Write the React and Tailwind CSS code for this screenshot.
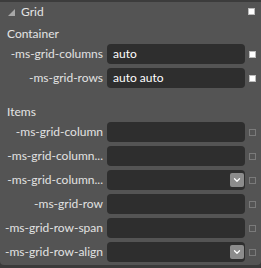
import { ChevronDown } from 'lucide-react';

// Property rows shown in the panel
const containerRows = [
  { label: '-ms-grid-columns', value: 'auto' },
  { label: '-ms-grid-rows', value: 'auto auto' },
];

const itemRows = [
  { label: '-ms-grid-column' },
  { label: '-ms-grid-column...' },
  { label: '-ms-grid-column...', select: true },
  { label: '-ms-grid-row' },
  { label: '-ms-grid-row-span' },
  { label: '-ms-grid-row-align', select: true },
];

function Row({ label, value, select, set }) {
  return (
    <div className="flex items-center h-5">
      <div className="w-[103px] text-right text-[#e2e2e2] whitespace-nowrap">{label}</div>
      <div className="ml-[4px] w-[138px] h-5 rounded-[4px] bg-[#2e2e2e] flex items-center pl-[6px] pr-[1px] text-white">
        <span className="flex-1">{value}</span>
        {select && (
          <div className="w-[14px] h-[14px] rounded-[2px] bg-[#8c8c8c] flex items-center justify-center">
            <ChevronDown size={10} strokeWidth={3} className="text-white" />
          </div>
        )}
      </div>
      <div
        className={
          set
            ? 'ml-[4px] w-[7px] h-[7px] bg-white border border-[#bbb]'
            : 'ml-[4px] w-[7px] h-[7px] border border-[#7a7a7a]'
        }
      />
    </div>
  );
}

export default function App() {
  return (
    <div className="w-[261px] h-[268px] bg-[#3a3a3a] text-[12px] leading-none" style={{ fontFamily: '"Segoe UI", Lato, sans-serif' }}>
      <div className="h-[265px] bg-[#545454] border-t-2 border-[#3c3c3c] rounded-b-[4px]">
        {/* Header */}
        <div className="flex items-center h-[19px] pl-[8px] pr-[6px]">
          <svg width="7" height="7" viewBox="0 0 7 7" className="mt-[1px]">
            <polygon points="7,0 7,7 0,7" fill="#a8a8a8" />
          </svg>
          <span className="ml-[6px] text-[#e4e4e4]">Grid</span>
          <div className="ml-auto w-[7px] h-[7px] bg-white border border-[#bbb]" />
        </div>

        {/* Container section */}
        <div className="h-[23px] flex items-center pt-[2px] pl-[7px] text-[#e4e4e4]">Container</div>
        <div className="flex flex-col gap-[4px]">
          {containerRows.map((r) => (
            <Row key={r.label} {...r} set />
          ))}
        </div>

        {/* Items section */}
        <div className="mt-[14px] h-[20px] flex items-center pl-[7px] text-[#e4e4e4]">Items</div>
        <div className="flex flex-col gap-[4px]">
          {itemRows.map((r, i) => (
            <Row key={i} {...r} />
          ))}
        </div>
      </div>
    </div>
  );
}
